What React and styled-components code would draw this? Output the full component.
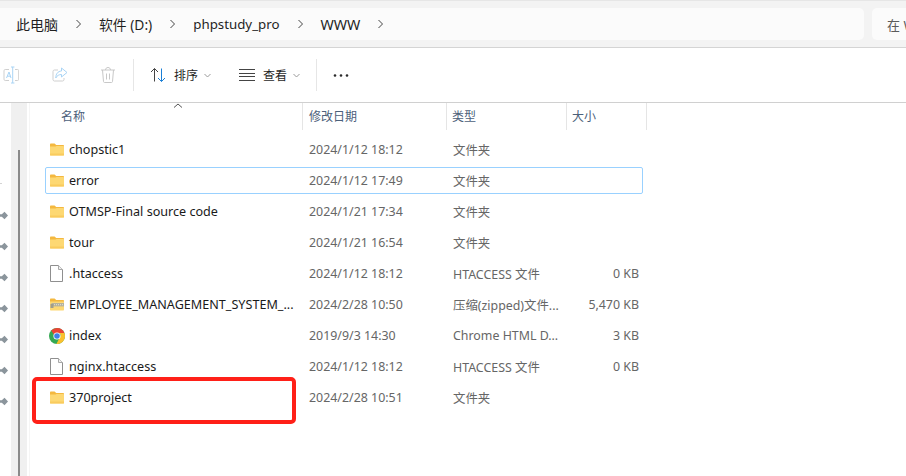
import React from "react";
import styled, { createGlobalStyle } from "styled-components";

const Global = createGlobalStyle`
  html, body { margin: 0; padding: 0; background: #fff; overflow: hidden; }
  body { font-family: "Noto Sans", "Noto Sans CJK SC", sans-serif; }
`;

const Page = styled.div`
  width: 906px;
  height: 476px;
  display: flex;
  flex-direction: column;
  overflow: hidden;
  position: relative;
`;

const AddressRow = styled.div`
  height: 48px;
  flex: none;
  box-sizing: border-box;
  background: #f3f3f3;
  border-top: 1px solid #e6e6e6;
  border-bottom: 1px solid #d4d4d4;
  padding-top: 7px;
  display: flex;
  gap: 8px;
`;

const Breadcrumbs = styled.div`
  width: 864px;
  height: 32px;
  flex: none;
  box-sizing: border-box;
  background: #fbfbfb;
  border-radius: 0 5px 5px 0;
  padding-left: 16px;
  display: flex;
  align-items: center;
  gap: 18px;
  color: #1f1f1f;
`;

const Crumb = styled.span`
  font-size: ${(p) => p.$size}px;
  white-space: nowrap;
`;

const SearchBox = styled.div`
  flex: 1;
  height: 32px;
  background: #fbfbfb;
  border-radius: 5px 0 0 5px;
  padding-left: 15px;
  display: flex;
  align-items: center;
  font-size: 13px;
  color: #5c5c5c;
  white-space: nowrap;
  overflow: hidden;
`;

const Toolbar = styled.div`
  height: 55px;
  flex: none;
  box-sizing: border-box;
  border-bottom: 1px solid #d0d0d0;
  padding-left: 3px;
  display: flex;
  align-items: center;
  background: #fff;
`;

const ToolIcon = styled.div`
  width: 16px;
  height: 18px;
  flex: none;
  margin-right: ${(p) => p.$after}px;
  display: flex;
  align-items: center;
  justify-content: center;
`;

const Divider = styled.div`
  width: 1px;
  height: 32px;
  flex: none;
  background: #e6e6e6;
  margin-right: ${(p) => p.$after}px;
`;

const ToolButton = styled.div`
  display: flex;
  align-items: center;
  flex: none;
  width: ${(p) => p.$width}px;
  color: #1f1f1f;
  svg { flex: none; }
`;

const ToolLabel = styled.span`
  margin: 0 6px 0 8px;
  padding-top: 2px;
  font-size: 12px;
  line-height: 16px;
`;

const Main = styled.div`
  flex: 1;
  display: flex;
  min-height: 0;
`;

const PinRail = styled.div`
  width: 11px;
  flex: none;
  box-sizing: border-box;
  padding-top: 80px;
  display: flex;
  flex-direction: column;
  gap: 22px;
`;

const Tick = styled.div`
  width: 2px;
  height: 1px;
  background: #d4d4d4;
  margin-bottom: 5px;
`;

const ScrollTrack = styled.div`
  width: 16px;
  flex: none;
  background: #f0f0f0;
  padding: 47px 0 0 7px;
  box-sizing: border-box;
`;

const ScrollThumb = styled.div`
  width: 2px;
  height: 100%;
  background: #8a8a8a;
`;

const Content = styled.div`
  flex: 1;
  margin-left: 2px;
  border-left: 1px solid #f5f5f5;
  padding-left: 15px;
  min-width: 0;
`;

const HeaderRow = styled.div`
  height: 27px;
  display: grid;
  grid-template-columns: 258px 144px 120px 80px;
  font-size: 12px;
  color: #4c607a;
  position: relative;
`;

const HeaderCell = styled.div`
  box-sizing: border-box;
  border-right: 1px solid #e5e5e5;
  padding-left: ${(p) => p.$pad}px;
  padding-top: 5px;
  line-height: 18px;
`;

const SortCaret = styled.svg`
  position: absolute;
  left: 128px;
  top: 0;
`;

const Rows = styled.div`
  margin-top: 6px;
  display: flex;
  flex-direction: column;
  gap: 4px;
`;

const Row = styled.div`
  width: 598px;
  height: 27px;
  box-sizing: border-box;
  display: grid;
  grid-template-columns: 257px 144px 120px 77px;
  align-items: center;
  border: 1px solid ${(p) => (p.$focused ? "#99d1ff" : "transparent")};
  border-radius: 2px;
  font-size: 12.4px;
  white-space: nowrap;
`;

const NameCell = styled.div`
  display: flex;
  align-items: center;
  margin-left: -1px;
  padding-left: 4px;
  color: #1a1a1a;
  font-size: 12.6px;
  svg { flex: none; margin-right: 4px; }
`;

const DateCell = styled.div`
  padding-left: 6px;
  color: #666;
`;

const TypeCell = styled.div`
  padding-left: 6px;
  color: #666;
`;

const SizeCell = styled.div`
  text-align: right;
  padding-right: 5px;
  color: #666;
`;

const Highlight = styled.div`
  position: absolute;
  left: 32px;
  top: 377px;
  width: 264px;
  height: 47px;
  box-sizing: border-box;
  border: 4px solid #ff2018;
  border-radius: 5px;
  pointer-events: none;
`;

const Chevron = () => (
  <svg width="5" height="10" viewBox="0 0 5 10" fill="none" stroke="#444" strokeWidth="1" style={{ flex: "none" }}>
    <path d="M.5 1l4 4-4 4" />
  </svg>
);

const Caret = () => (
  <svg width="7" height="5" viewBox="0 0 7 5" fill="none" stroke="#9a9a9a" strokeWidth="1">
    <path d="M.5 1l3 3 3-3" />
  </svg>
);

const Pin = () => (
  <svg width="8" height="9" viewBox="0 0 8 9" style={{ display: "block", flex: "none" }}>
    <path d="M0 3.300h1.800L4.500 .8 8 4.500 4.500 8.200 1.800 5.700H0z" fill="#8b959c" />
  </svg>
);

const Folder = () => (
  <svg width="16" height="14" viewBox="0 0 16 14">
    <path d="M1 1.500C1 1 1.300 .5 2 .5h3.600l1.600 1.600H14c.6 0 1 .4 1 1V4H1z" fill="#f4b83f" />
    <path d="M1 3.600h5.400L7.600 3H14.400c.4 0 .6 .3 .6 .6v8.200c0 .4-.3 .7-.7 .7H1.700c-.4 0-.7-.3-.7-.7z" fill="#fdd873" />
    <path d="M1 10.500h14v1.400c0 .4-.3 .6-.7 .6H1.700c-.4 0-.7-.2-.7-.6z" fill="#f9cb5e" />
  </svg>
);

const ZipFolder = () => (
  <svg width="16" height="14" viewBox="0 0 16 14">
    <path d="M1 1.500C1 1 1.300 .5 2 .5h3.600l1.600 1.600H14c.6 0 1 .4 1 1V4H1z" fill="#f4b83f" />
    <path d="M1 3.600h14v8.200c0 .4-.3 .7-.7 .7H1.700c-.4 0-.7-.3-.7-.7z" fill="#fdd873" />
    <rect x="2.500" y="5" width="12.500" height="3.400" fill="#b5b19c" />
    <path d="M3 6.700h12" stroke="#e4e2d2" strokeWidth="1" strokeDasharray="1 1" />
    <rect x="1.500" y="6" width="3" height="4" fill="#a19e8b" />
  </svg>
);

const FileIcon = () => (
  <svg width="16" height="17" viewBox="0 0 16 17" fill="none">
    <path d="M1.500 .5h8l4 4v12h-12z" fill="#fff" stroke="#8f8f8f" />
    <path d="M9.500 .5v4h4" fill="#f0f0f0" stroke="#a8a8a8" />
  </svg>
);

const ChromeIcon = () => (
  <svg width="16" height="16" viewBox="0 0 16 16">
    <circle cx="8" cy="8" r="8" fill="#34a853" />
    <path d="M8 0a8 8 0 0 1 7.400 5H8a3 3 0 0 0-2.800 2L2.200 2.500A8 8 0 0 1 8 0z" fill="#ea4335" />
    <path d="M15.400 5A8 8 0 0 1 7.400 16L10.700 9.400A3 3 0 0 0 10.200 5z" fill="#fbc02d" />
    <circle cx="8" cy="8" r="3.600" fill="#fff" />
    <circle cx="8" cy="8" r="2.800" fill="#3f7fe8" />
  </svg>
);

const RenameIcon = () => (
  <svg width="16" height="18" viewBox="0 0 16 18" fill="none">
    <path d="M6 3.500H2.200C1.500 3.500 1 4 1 4.700v8.600c0 .7 .5 1.200 1.200 1.200H6" stroke="#cfcfcf" />
    <path d="M12 3.500h2.600c.7 0 1.100 .5 1.100 1.200v8.600c0 .7-.4 1.200-1.100 1.200H12" stroke="#cfcfcf" />
    <path d="M9.700 1v16M8 1h3.400M8 17h3.400" stroke="#a9d4f5" />
    <path d="M3.500 12L6 6l2 6M4.300 10.200h3" stroke="#a9d4f5" />
  </svg>
);

const ShareIcon = () => (
  <svg width="16" height="18" viewBox="0 0 16 18" fill="none">
    <path d="M6 4H2.400C1.600 4 1 4.600 1 5.400v8.200C1 14.400 1.600 15 2.400 15h8.200c.8 0 1.400-.6 1.400-1.400V12" stroke="#cfcfcf" />
    <path d="M9.500 2l5.500 4.500L9.500 11V8.500C7 8.500 5 9.500 3.800 12c0-4 2-6.800 5.700-7z" stroke="#a9d4f5" />
  </svg>
);

const TrashIcon = () => (
  <svg width="16" height="18" viewBox="0 0 16 18" fill="none" stroke="#c8c8c8">
    <path d="M1 4h14M5.500 4c0-1.500 1-2.500 2.500-2.500s2.500 1 2.500 2.500" />
    <path d="M2.500 4l1 11.500c0 .6 .5 1 1 1h7c.5 0 1-.4 1-1L13.500 4" />
    <path d="M6.500 7.500v6M9.500 7.500v6" />
  </svg>
);

const SortIcon = () => (
  <svg width="16" height="16" viewBox="0 0 16 16" fill="none">
    <path d="M4.500 14.500V1.500M1 5l3.500-3.500L8 5" stroke="#444" />
    <path d="M11.500 1.500v13M8 11l3.500 3.500L15 11" stroke="#1a7fd6" />
  </svg>
);

const ViewIcon = () => (
  <svg width="16" height="12" viewBox="0 0 16 12" stroke="#444" strokeWidth="1">
    <path d="M0 .5h16M0 4.500h16M0 7.500h16M0 11.500h16" />
  </svg>
);

const Dots = () => (
  <svg width="16" height="6" viewBox="0 0 16 6" fill="#2b2b2b">
    <circle cx="2" cy="3.500" r="1.300" />
    <circle cx="8" cy="3.500" r="1.300" />
    <circle cx="14" cy="3.500" r="1.300" />
  </svg>
);

const crumbs = [
  { label: "此电脑", size: 14 },
  { label: "软件 (D:)", size: 13.8 },
  { label: "phpstudy_pro", size: 13.3 },
  { label: "WWW", size: 14.3 },
];

const files = [
  { name: "chopstic1", icon: Folder, date: "2024/1/12 18:12", type: "文件夹", size: "" },
  { name: "error", icon: Folder, date: "2024/1/12 17:49", type: "文件夹", size: "", focused: true },
  { name: "OTMSP-Final source code", icon: Folder, date: "2024/1/21 17:34", type: "文件夹", size: "" },
  { name: "tour", icon: Folder, date: "2024/1/21 16:54", type: "文件夹", size: "" },
  { name: ".htaccess", icon: FileIcon, date: "2024/1/12 18:12", type: "HTACCESS 文件", size: "0 KB" },
  { name: "EMPLOYEE_MANAGEMENT_SYSTEM_...", icon: ZipFolder, date: "2024/2/28 10:50", type: "压缩(zipped)文件...", size: "5,470 KB" },
  { name: "index", icon: ChromeIcon, date: "2019/9/3 14:30", type: "Chrome HTML D...", size: "3 KB" },
  { name: "nginx.htaccess", icon: FileIcon, date: "2024/1/12 18:12", type: "HTACCESS 文件", size: "0 KB" },
  { name: "370project", icon: Folder, date: "2024/2/28 10:51", type: "文件夹", size: "" },
];

export default function App() {
  return (
    <Page>
      <Global />
      <AddressRow>
        <Breadcrumbs>
          {crumbs.map((c) => (
            <React.Fragment key={c.label}>
              <Crumb $size={c.size}>{c.label}</Crumb>
              <Chevron />
            </React.Fragment>
          ))}
        </Breadcrumbs>
        <SearchBox>在 WWW 中搜索</SearchBox>
      </AddressRow>
      <Toolbar>
        <ToolIcon $after={33}><RenameIcon /></ToolIcon>
        <ToolIcon $after={32}><ShareIcon /></ToolIcon>
        <ToolIcon $after={17}><TrashIcon /></ToolIcon>
        <Divider $after={16} />
        <ToolButton $width={89}>
          <SortIcon />
          <ToolLabel>排序</ToolLabel>
          <Caret />
        </ToolButton>
        <ToolButton $width={77}>
          <ViewIcon />
          <ToolLabel>查看</ToolLabel>
          <Caret />
        </ToolButton>
        <Divider $after={16} />
        <ToolIcon $after={0}><Dots /></ToolIcon>
      </Toolbar>
      <Main>
        <PinRail>
          <Tick />
          {[0, 1, 2, 3, 4, 5, 6].map((i) => <Pin key={i} />)}
        </PinRail>
        <ScrollTrack><ScrollThumb /></ScrollTrack>
        <Content>
          <HeaderRow>
            <SortCaret width="10" height="5" viewBox="0 0 10 5" fill="none" stroke="#555">
              <path d="M1 4.500l4-3.500 4 3.500" />
            </SortCaret>
            <HeaderCell $pad={16}>名称</HeaderCell>
            <HeaderCell $pad={6}>修改日期</HeaderCell>
            <HeaderCell $pad={5}>类型</HeaderCell>
            <HeaderCell $pad={5}>大小</HeaderCell>
          </HeaderRow>
          <Rows>
            {files.map((f) => (
              <Row key={f.name} $focused={f.focused}>
                <NameCell><f.icon />{f.name}</NameCell>
                <DateCell>{f.date}</DateCell>
                <TypeCell>{f.type}</TypeCell>
                <SizeCell>{f.size}</SizeCell>
              </Row>
            ))}
          </Rows>
        </Content>
      </Main>
      <Highlight />
    </Page>
  );
}
